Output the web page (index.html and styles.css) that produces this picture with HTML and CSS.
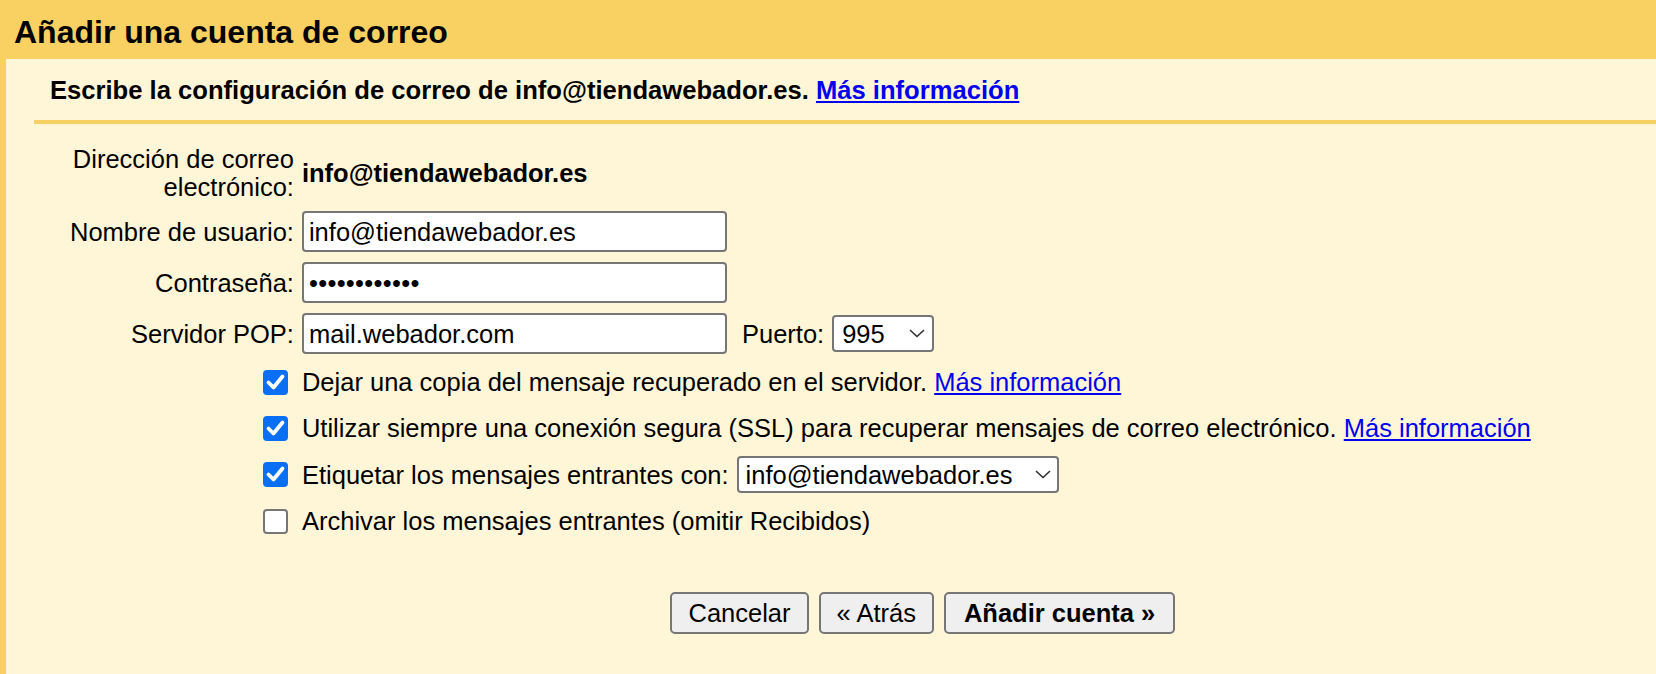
FILE: index.html
```html
<!DOCTYPE html>
<html lang="es">
<head>
<meta charset="utf-8">
<title>Añadir una cuenta de correo</title>
<link rel="stylesheet" href="styles.css">
</head>
<body>
  <header class="hdr">
    <h1 class="title">Añadir una cuenta de correo</h1>
  </header>
  <main class="panel">
    <div class="intro">
      <p class="intro-text">Escribe la configuración de correo de info@tiendawebador.es. <a href="#" class="link">Más información</a></p>
    </div>
    <div class="form">
      <div class="label">Dirección de correo<br>electrónico:</div>
      <div class="value value-strong"><span>info@tiendawebador.es</span></div>

      <div class="label">Nombre de usuario:</div>
      <div class="value"><div class="field">info@tiendawebador.es</div></div>

      <div class="label">Contraseña:</div>
      <div class="value"><div class="field field-pass">••••••••••••</div></div>

      <div class="label">Servidor POP:</div>
      <div class="value">
        <div class="field">mail.webador.com</div>
        <span class="port-label">Puerto:</span>
        <div class="select select-port"><span>995</span><svg class="chev" viewBox="0 0 16 9"><polyline points="1.5,1.5 8,7.5 14.5,1.5" fill="none" stroke="#333" stroke-width="1.7" stroke-linecap="round" stroke-linejoin="round"/></svg></div>
      </div>

      <div class="check-cell"><span class="check check-on"><svg viewBox="0 0 25 25" class="tick"><polyline points="5.5,12.5 10.5,17.5 19.5,6.5" fill="none" stroke="#fff" stroke-width="3.8" stroke-linecap="round" stroke-linejoin="round"/></svg></span></div>
      <div class="value"><span>Dejar una copia del mensaje recuperado en el servidor. <a href="#" class="link">Más información</a></span></div>

      <div class="check-cell"><span class="check check-on"><svg viewBox="0 0 25 25" class="tick"><polyline points="5.5,12.5 10.5,17.5 19.5,6.5" fill="none" stroke="#fff" stroke-width="3.8" stroke-linecap="round" stroke-linejoin="round"/></svg></span></div>
      <div class="value"><span>Utilizar siempre una conexión segura (SSL) para recuperar mensajes de correo electrónico. <a href="#" class="link">Más información</a></span></div>

      <div class="check-cell"><span class="check check-on"><svg viewBox="0 0 25 25" class="tick"><polyline points="5.5,12.5 10.5,17.5 19.5,6.5" fill="none" stroke="#fff" stroke-width="3.8" stroke-linecap="round" stroke-linejoin="round"/></svg></span></div>
      <div class="value">
        <span>Etiquetar los mensajes entrantes con:</span>
        <div class="select select-label"><span>info@tiendawebador.es</span><svg class="chev" viewBox="0 0 16 9"><polyline points="1.5,1.5 8,7.5 14.5,1.5" fill="none" stroke="#333" stroke-width="1.7" stroke-linecap="round" stroke-linejoin="round"/></svg></div>
      </div>

      <div class="check-cell"><span class="check check-off"></span></div>
      <div class="value"><span>Archivar los mensajes entrantes (omitir Recibidos)</span></div>

      <div class="actions">
        <button class="btn" type="button">Cancelar</button>
        <button class="btn" type="button">« Atrás</button>
        <button class="btn btn-primary" type="button">Añadir cuenta »</button>
      </div>
    </div>
  </main>
</body>
</html>
```

FILE: styles.css
```css
html, body {
  height: 100%;
}

body {
  margin: 0;
  background: #f9d162;
  font-family: "Liberation Sans", Arial, Helvetica, sans-serif;
  color: #000;
  display: flex;
  flex-direction: column;
}

.hdr {
  padding: 14px 14px 8px;
}

.title {
  margin: 0;
  font-size: 32px;
  line-height: 37px;
  font-weight: bold;
}

.panel {
  flex: 1;
  margin-left: 6px;
  background: #fff6d7;
}

.intro {
  margin-left: 28px;
  padding: 17px 0 15px 16px;
  border-bottom: 4px solid #f9d162;
}

.intro-text {
  margin: 0;
  font-size: 25.6px;
  line-height: 29px;
  font-weight: bold;
}

.link {
  color: #0000ee;
  text-decoration: underline;
}

.form {
  display: grid;
  grid-template-columns: max-content max-content;
  column-gap: 8px;
  row-gap: 10px;
  align-items: center;
  padding: 21px 0 0 64px;
  font-size: 25.5px;
  line-height: 28px;
}

.label {
  text-align: right;
  white-space: nowrap;
}

.value {
  display: flex;
  align-items: center;
  white-space: nowrap;
  min-height: 36px;
}

.value-strong {
  font-weight: bold;
}

.field {
  box-sizing: border-box;
  width: 425px;
  height: 41px;
  border: 2px solid #767676;
  border-radius: 4px;
  background: #fff;
  padding-left: 5px;
  display: flex;
  align-items: center;
}

.field-pass {
  letter-spacing: 0.3px;
}

.port-label {
  margin-left: 15px;
  margin-right: 8px;
}

.select {
  box-sizing: border-box;
  height: 37px;
  border: 2px solid #767676;
  border-radius: 4px;
  background: #fff;
  display: flex;
  align-items: center;
  justify-content: space-between;
}

.select-port {
  width: 102px;
  padding: 0 7px 0 8px;
}

.select-label {
  width: 322px;
  margin-left: 8px;
  padding: 0 6px 0 7px;
}

.chev {
  width: 16px;
  height: 9px;
  display: block;
}

.check-cell {
  justify-self: end;
  margin-right: 6px;
  display: flex;
}

.check {
  box-sizing: border-box;
  width: 25px;
  height: 25px;
  border-radius: 4px;
  display: block;
}

.check-on {
  background: #0b6ff6;
}

.check-off {
  background: #fff;
  border: 2px solid #767676;
}

.tick {
  width: 25px;
  height: 25px;
  display: block;
}

.actions {
  grid-column: 2;
  display: flex;
  justify-content: center;
  gap: 10px;
  margin-top: 43px;
  padding-left: 13px;
}

.btn {
  box-sizing: border-box;
  height: 42px;
  padding: 0 16px;
  border: 2px solid #767676;
  border-radius: 5px;
  background: #efefef;
  font-family: inherit;
  font-size: 25.5px;
  color: #000;
}

.btn-primary {
  font-weight: bold;
  padding: 0 18px;
}
```
